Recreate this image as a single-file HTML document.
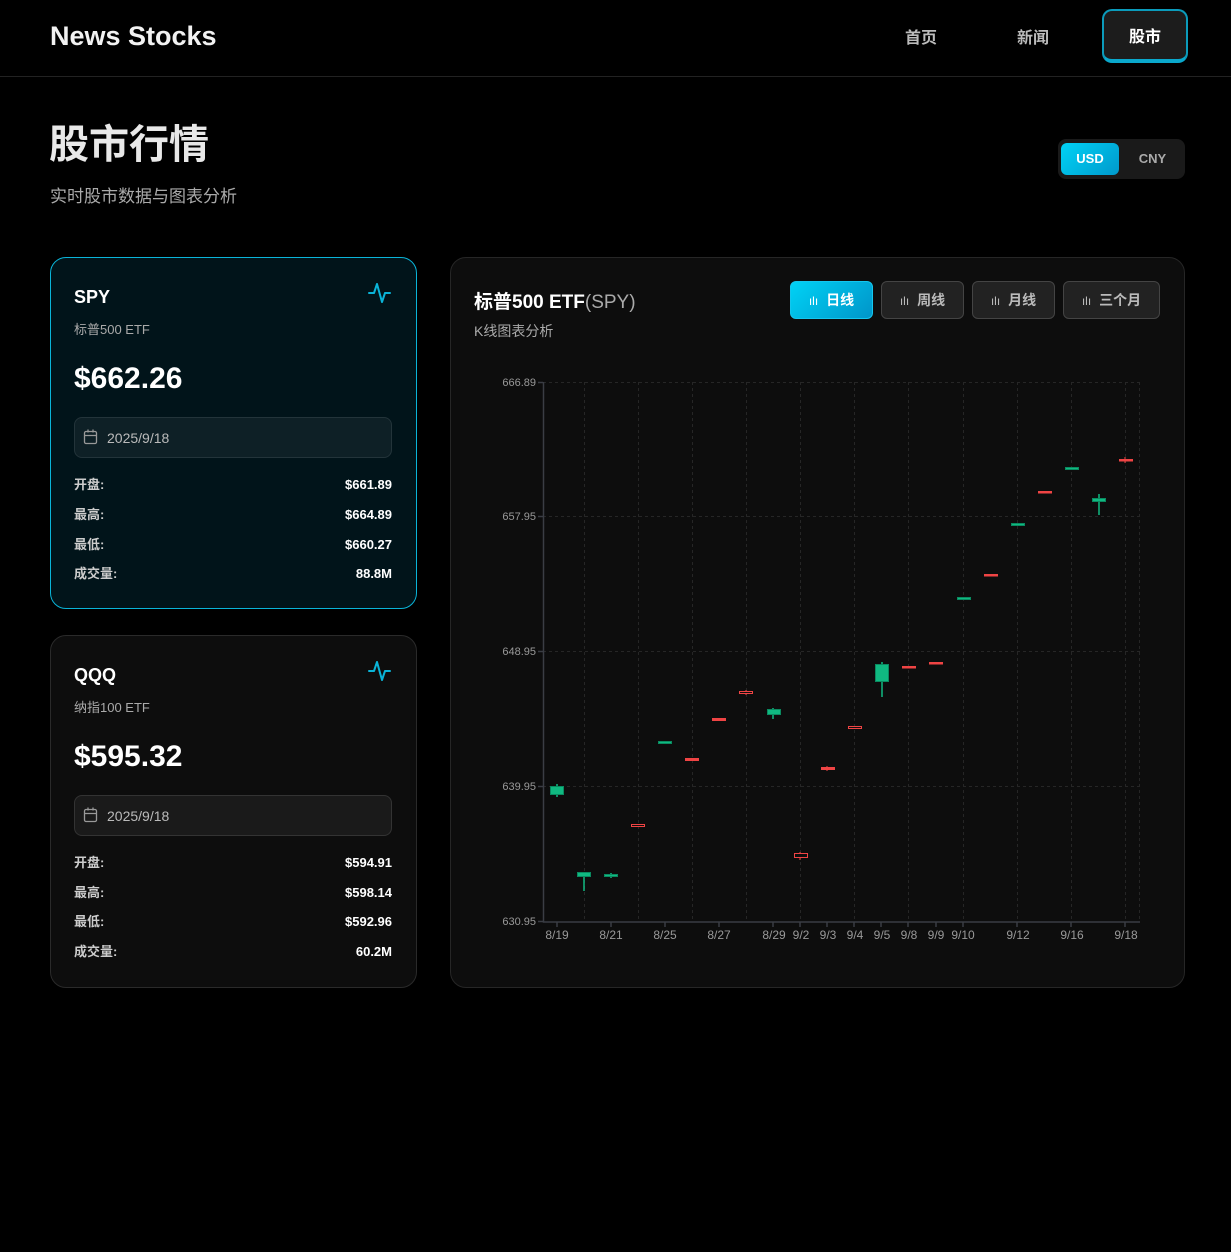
<!DOCTYPE html>
<html><head><meta charset="utf-8"><style>
*{margin:0;padding:0;box-sizing:border-box}
body{width:1231px;height:1252px;background:#000;font-family:"Liberation Sans","Noto Sans CJK SC",sans-serif;color:#fff;position:relative;overflow:hidden}
.a{position:absolute}
.hdr{left:0;top:0;width:1231px;height:77px;border-bottom:1px solid #222}
.logo{left:50px;top:21px;font-size:27px;font-weight:bold;color:#f2f2f2}
.nav{font-size:16px;font-weight:bold;color:#bbb}
.navact{left:1102px;top:9px;width:86px;height:54px;border:2px solid #0b9bbb;border-bottom:4px solid #0aa8cc;border-radius:10px;background:#1c1c1c;color:#fff;font-size:16px;font-weight:bold;text-align:center;line-height:54px}
.card{border-radius:16px}
.sym{font-size:18px;font-weight:bold}
.sub{font-size:13px;color:#aaa}
.price{font-size:30px;font-weight:bold}
.date{height:41px;border-radius:8px;font-size:14px;color:#bbb;padding-left:32px;line-height:40px}
.row{font-size:13px;font-weight:bold;color:#ccc;display:flex;justify-content:space-between;align-items:baseline;width:318px;line-height:16px}
.row b{color:#fff}
.btn{top:281px;height:38px;border-radius:6px;background:#222;border:1px solid #444;color:#bbb;font-size:14px;font-weight:bold;line-height:36px;text-align:center}
.btn.on{background:linear-gradient(135deg,#00d2f5,#0095c9);border-color:#14c6ee;color:#fff}
.lbl{font-size:11px;fill:#999;font-family:"Liberation Sans",sans-serif}
</style></head><body>
<div class="a hdr"></div>
<div class="a logo">News Stocks</div>
<div class="a nav" style="left:905px;top:24px">首页</div>
<div class="a nav" style="left:1017px;top:24px">新闻</div>
<div class="a navact">股市</div>

<div class="a" style="left:49px;top:112px;font-size:40px;font-weight:bold;color:#e8e8e8">股市行情</div>
<div class="a" style="left:50px;top:182px;font-size:17px;color:#aaa">实时股市数据与图表分析</div>

<div class="a" style="left:1058px;top:139px;width:127px;height:40px;border-radius:8px;background:#1a1a1a"></div>
<div class="a" style="left:1061px;top:143px;width:58px;height:32px;border-radius:6px;background:linear-gradient(135deg,#00d2f5,#0099cc);font-size:13px;font-weight:bold;text-align:center;line-height:32px">USD</div>
<div class="a" style="left:1125px;top:143px;width:55px;height:32px;font-size:13px;font-weight:bold;color:#aaa;text-align:center;line-height:32px">CNY</div>

<div class="a card" style="left:50px;top:257px;width:367px;height:352px;background:#01141a;border:1px solid #0ab4d8"></div>
<div class="a sym" style="left:74px;top:287px">SPY</div>
<div class="a sub" style="left:74px;top:319px">标普500 ETF</div>
<div class="a price" style="left:74px;top:362px">$662.26</div>
<div class="a date" style="left:74px;top:417px;width:318px;background:#0e2026;border:1px solid #23343a">2025/9/18</div>
<div class="a row" style="left:74px;top:477px"><span>开盘:</span><b>$661.89</b></div>
<div class="a row" style="left:74px;top:507px"><span>最高:</span><b>$664.89</b></div>
<div class="a row" style="left:74px;top:537px"><span>最低:</span><b>$660.27</b></div>
<div class="a row" style="left:74px;top:566px"><span>成交量:</span><b>88.8M</b></div>

<div class="a card" style="left:50px;top:635px;width:367px;height:353px;background:#0d0d0d;border:1px solid #2a2a2a"></div>
<div class="a sym" style="left:74px;top:665px">QQQ</div>
<div class="a sub" style="left:74px;top:697px">纳指100 ETF</div>
<div class="a price" style="left:74px;top:740px">$595.32</div>
<div class="a date" style="left:74px;top:795px;width:318px;background:#1a1a1a;border:1px solid #333">2025/9/18</div>
<div class="a row" style="left:74px;top:855px"><span>开盘:</span><b>$594.91</b></div>
<div class="a row" style="left:74px;top:885px"><span>最高:</span><b>$598.14</b></div>
<div class="a row" style="left:74px;top:914px"><span>最低:</span><b>$592.96</b></div>
<div class="a row" style="left:74px;top:944px"><span>成交量:</span><b>60.2M</b></div>

<div class="a card" style="left:450px;top:257px;width:735px;height:731px;background:#0d0d0d;border:1px solid #262626"></div>
<div class="a" style="left:474px;top:287px;font-size:19px;font-weight:bold">标普500 ETF<span style="font-weight:normal;color:#aaa">(SPY)</span></div>
<div class="a" style="left:474px;top:321px;font-size:14px;color:#aaa">K线图表分析</div>
<div class="a btn on" style="left:790px;width:83px"><span style="font-weight:normal;font-size:12px;margin-right:8px">ılı</span>日线</div>
<div class="a btn" style="left:881px;width:83px"><span style="font-weight:normal;font-size:12px;margin-right:8px">ılı</span>周线</div>
<div class="a btn" style="left:972px;width:83px"><span style="font-weight:normal;font-size:12px;margin-right:8px">ılı</span>月线</div>
<div class="a btn" style="left:1063px;width:97px"><span style="font-weight:normal;font-size:12px;margin-right:8px">ılı</span>三个月</div>

<svg class="a" style="left:0;top:0" width="1231" height="1252" viewBox="0 0 1231 1252">
<g fill="none" stroke="#0ab4d8" stroke-width="2" stroke-linecap="round" stroke-linejoin="round">
<path d="M369 293h5l3-9 5 18 3-9h5"/>
<path d="M369 671h5l3-9 5 18 3-9h5"/>
</g>
<g fill="none" stroke="#999" stroke-width="1.3">
<rect x="84.5" y="431.5" width="12" height="12" rx="1.5"/><path d="M84.5 435.5h12M88 429.5v3M93 429.5v3"/>
<rect x="84.5" y="809.5" width="12" height="12" rx="1.5"/><path d="M84.5 813.5h12M88 807.5v3M93 807.5v3"/>
</g>
<g fill="none" stroke="#262626" stroke-width="1" stroke-dasharray="3,3">
<path d="M543 382.5H1140M543 516.5H1140M543 651.5H1140M543 786.5H1140"/>
<path d="M584.5 382V921M638.5 382V921M692.5 382V921M746.5 382V921M800.5 382V921M854.5 382V921M908.5 382V921M963.5 382V921M1017.5 382V921M1071.5 382V921M1125.5 382V921M1139.5 382V921"/>
</g>
<g fill="none" stroke="#3a3d44" stroke-width="1.5"><path d="M543.5 382V922H1140"/>
<path d="M538 382.5h5M538 516.5h5M538 651.5h5M538 786.5h5M538 921.5h5"/>
<path d="M557 922v5M611 922v5M665 922v5M719 922v5M773 922v5M800 922v5M827 922v5M854 922v5M881 922v5M908 922v5M936 922v5M963 922v5M1017 922v5M1071 922v5M1125 922v5"/></g>
<g class="lbl" text-anchor="end">
<text x="536" y="386">666.89</text><text x="536" y="520">657.95</text><text x="536" y="655">648.95</text><text x="536" y="790">639.95</text><text x="536" y="925">630.95</text>
</g>
<g class="lbl" text-anchor="middle" style="font-size:12px">
<text x="557" y="939">8/19</text><text x="611" y="939">8/21</text><text x="665" y="939">8/25</text><text x="719" y="939">8/27</text><text x="774" y="939">8/29</text><text x="801" y="939">9/2</text><text x="828" y="939">9/3</text><text x="855" y="939">9/4</text><text x="882" y="939">9/5</text><text x="909" y="939">9/8</text><text x="936" y="939">9/9</text><text x="963" y="939">9/10</text><text x="1018" y="939">9/12</text><text x="1072" y="939">9/16</text><text x="1126" y="939">9/18</text>
</g>
<g fill="#10b981" stroke="#0a8a60" stroke-width="1">
<path d="M557 784V797M584 872V891M611 873V878M665 741V744M773 708V719M882 662V697M1099 494V515" fill="none" stroke="#10b981" stroke-width="1.5"/>
<rect x="550.5" y="786.5" width="13" height="8"/>
<rect x="577.5" y="872.5" width="13" height="4"/>
<rect x="604.5" y="874.5" width="13" height="2"/>
<rect x="658.5" y="741.5" width="13" height="2"/>
<rect x="767.5" y="709.5" width="13" height="5"/>
<rect x="875.5" y="664.5" width="13" height="17"/>
<rect x="957.5" y="597.5" width="13" height="2"/>
<rect x="1011.5" y="523.5" width="13" height="2"/>
<rect x="1065.5" y="467.5" width="13" height="2"/>
<rect x="1092.5" y="498.5" width="13" height="3"/>
</g>
<g fill="#0d0d0d" stroke="#ef4444" stroke-width="1">
<path d="M746 690V695M800 852V860M827 766V771M1125 457V463" fill="none" stroke="#ef4444"/>
<rect x="631.5" y="824.5" width="13" height="2"/>
<rect x="685.5" y="758.5" width="13" height="2" fill="#ef4444"/>
<rect x="712.5" y="718.5" width="13" height="2" fill="#ef4444"/>
<rect x="739.5" y="691.5" width="13" height="2"/>
<rect x="794.5" y="853.5" width="13" height="4"/>
<rect x="821.5" y="767.5" width="13" height="2" fill="#ef4444"/>
<rect x="848.5" y="726.5" width="13" height="2"/>
<rect x="902.5" y="666.5" width="13" height="1.5" fill="#ef4444"/>
<rect x="929.5" y="662.5" width="13" height="1.5" fill="#ef4444"/>
<rect x="984.5" y="574.5" width="13" height="1.5" fill="#ef4444"/>
<rect x="1038.5" y="491.5" width="13" height="1.5" fill="#ef4444"/>
<rect x="1119.5" y="459.5" width="13" height="1.5" fill="#ef4444"/>
</g>
</svg>
</body></html>
